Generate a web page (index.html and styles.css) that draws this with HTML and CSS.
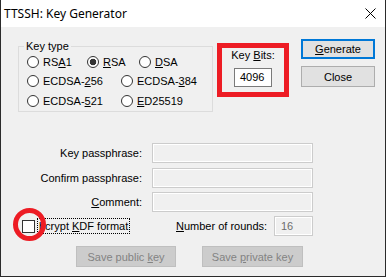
FILE: index.html
```html
<!DOCTYPE html>
<html>
<head>
<meta charset="utf-8">
<link rel="stylesheet" href="styles.css">
</head>
<body>
<div class="window">
  <div class="titlebar">
    <span class="title">TTSSH: Key Generator</span>
    <svg class="close" width="11" height="11" viewBox="0 0 11 11"><path d="M0.5 0.5 L10.5 10.5 M10.5 0.5 L0.5 10.5" stroke="#000" stroke-width="1" fill="none"/></svg>
  </div>
  <div class="body">
    <div class="top">
      <fieldset class="keytype">
        <legend>Key type</legend>
        <div class="rrow r1">
          <label class="radio w60"><span class="circle"></span><span>RS<u>A</u>1</span></label>
          <label class="radio w52"><span class="circle checked"></span><span><u>R</u>SA</span></label>
          <label class="radio"><span class="circle"></span><span><u>D</u>SA</span></label>
        </div>
        <div class="rrow r2">
          <label class="radio w94"><span class="circle"></span><span>ECDSA-<u>2</u>56</span></label>
          <label class="radio"><span class="circle"></span><span>ECDSA-<u>3</u>84</span></label>
        </div>
        <div class="rrow r3">
          <label class="radio w94"><span class="circle"></span><span>ECDSA-<u>5</u>21</span></label>
          <label class="radio"><span class="circle"></span><span><u>E</u>D25519</span></label>
        </div>
      </fieldset>
      <div class="keybits">
        <div class="kb-label">Key <u>B</u>its:</div>
        <div class="kb-input">4096</div>
      </div>
      <div class="buttons">
        <div class="btn default gen"><span><u>G</u>enerate</span></div>
        <div class="btn close-btn"><span>Close</span></div>
      </div>
    </div>
    <div class="form">
      <div class="flabel">Key passphrase:</div>
      <div class="field"></div>
      <div class="flabel">Confirm passphrase:</div>
      <div class="field"></div>
      <div class="flabel"><u>C</u>omment:</div>
      <div class="field"></div>
    </div>
    <div class="kdf">
      <div class="kdf-check">
        <span class="checkbox"></span>
        <span class="focus">bcrypt <u>K</u>DF format</span>
      </div>
      <div class="rounds-label"><u>N</u>umber of rounds:</div>
      <div class="field rounds">16</div>
    </div>
    <div class="saves">
      <div class="btn disabled pub"><span>Save public <u>k</u>ey</span></div>
      <div class="btn disabled priv"><span>Save <u>p</u>rivate key</span></div>
    </div>
  </div>
  <div class="ring"></div>
</div>
</body>
</html>
```
FILE: styles.css
```css
html, body {
  margin: 0;
  padding: 0;
  background: #ffffff;
}

.window {
  position: relative;
  width: 386px;
  height: 277px;
  box-sizing: border-box;
  border: 1px solid #2b2b2b;
  border-top: none;
  background: #f0f0f0;
  display: flex;
  flex-direction: column;
  font-family: "Liberation Sans", Arial, sans-serif;
  font-size: 11px;
  color: #000;
}

.titlebar {
  height: 27px;
  flex: none;
  background: #ffffff;
  display: flex;
  align-items: center;
  padding-left: 3px;
}

.title {
  font-family: "Noto Sans", sans-serif;
  font-size: 12px;
  color: #000;
}

.close {
  margin-left: auto;
  margin-right: 9px;
  display: block;
}

.body {
  padding: 12px 0 0 17px;
  display: flex;
  flex-direction: column;
}

.top {
  display: flex;
  align-items: flex-start;
}

.keytype {
  margin: 1px 0 0 0;
  width: 195px;
  box-sizing: border-box;
  border: 1px solid #dcdcdc;
  padding: 0 5px;
  min-width: 0;
}

.keytype legend {
  padding: 0 2px;
  line-height: 13px;
}

.rrow {
  display: flex;
  align-items: center;
  margin-left: 3px;
}

.r1 { height: 18px; }
.r2 { height: 19px; }
.r3 { height: 21px; }

.radio {
  display: flex;
  align-items: center;
  gap: 4px;
  white-space: nowrap;
}

.w60 { width: 60px; }
.w52 { width: 52px; }
.w94 { width: 94px; }

.circle {
  width: 12px;
  height: 12px;
  box-sizing: border-box;
  border: 1px solid #333;
  border-radius: 50%;
  background: #fff;
  flex: none;
}

.circle.checked {
  background: radial-gradient(circle, #333 0 3px, #fff 3.6px);
}

u {
  text-decoration: underline;
  text-underline-offset: 1px;
}

.keybits {
  margin: 4px 0 0 4px;
  width: 72px;
  height: 54px;
  box-sizing: border-box;
  border: 5px solid #ed1c24;
  display: flex;
  flex-direction: column;
  align-items: center;
  padding-top: 1px;
}

.kb-label {
  line-height: 13px;
}

.kb-input {
  margin-top: 6px;
  width: 38px;
  height: 19px;
  box-sizing: border-box;
  border: 1px solid #7a7a7a;
  background: #fff;
  padding-left: 5px;
  line-height: 17px;
}

.buttons {
  margin-left: 12px;
  display: flex;
  flex-direction: column;
  gap: 7px;
}

.btn {
  box-sizing: border-box;
  border: 1px solid #adadad;
  background: #e1e1e1;
  display: flex;
  align-items: center;
  justify-content: center;
  height: 21px;
  white-space: nowrap;
}

.buttons .btn {
  width: 74px;
}

.gen {
  height: 20px;
}

.btn.default {
  border-color: #0078d7;
  box-shadow: inset 0 0 0 1px #0078d7;
}

.form {
  margin-top: 31px;
  display: grid;
  grid-template-columns: 124px 161px;
  grid-template-rows: 20px 20px 20px;
  column-gap: 10px;
  row-gap: 4.5px;
  align-items: center;
}

.flabel {
  text-align: right;
  white-space: nowrap;
}

.field {
  height: 20px;
  box-sizing: border-box;
  border: 1px solid #cccccc;
  box-shadow: inset 0 0 0 1px #ffffff;
  background: #f0f0f0;
}

.kdf {
  margin-top: 4px;
  height: 20px;
  display: flex;
  align-items: center;
}

.kdf-check {
  width: 154px;
  margin-left: 4px;
  display: flex;
  align-items: center;
}

.checkbox {
  width: 13px;
  height: 13px;
  box-sizing: border-box;
  border: 1px solid #333;
  background: #fff;
  flex: none;
}

.focus {
  margin-left: 2px;
  border: 1px dotted #000;
  padding: 0 1px;
  line-height: 14px;
  white-space: nowrap;
}

.rounds-label {
  width: 98px;
  white-space: nowrap;
}

.rounds {
  width: 39px;
  color: #6d6d6d;
  padding-left: 6px;
  line-height: 18px;
}

.saves {
  margin-top: 10px;
  display: flex;
}

.btn.disabled {
  background: #cccccc;
  border-color: #bfbfbf;
  color: #838383;
}

.pub {
  margin-left: 58px;
  width: 100px;
}

.priv {
  margin-left: 26px;
  width: 101px;
}

.ring {
  position: absolute;
  left: 12px;
  top: 208px;
  width: 33px;
  height: 33px;
  box-sizing: border-box;
  border: 5px solid #ed1c24;
  border-radius: 50%;
}
```
